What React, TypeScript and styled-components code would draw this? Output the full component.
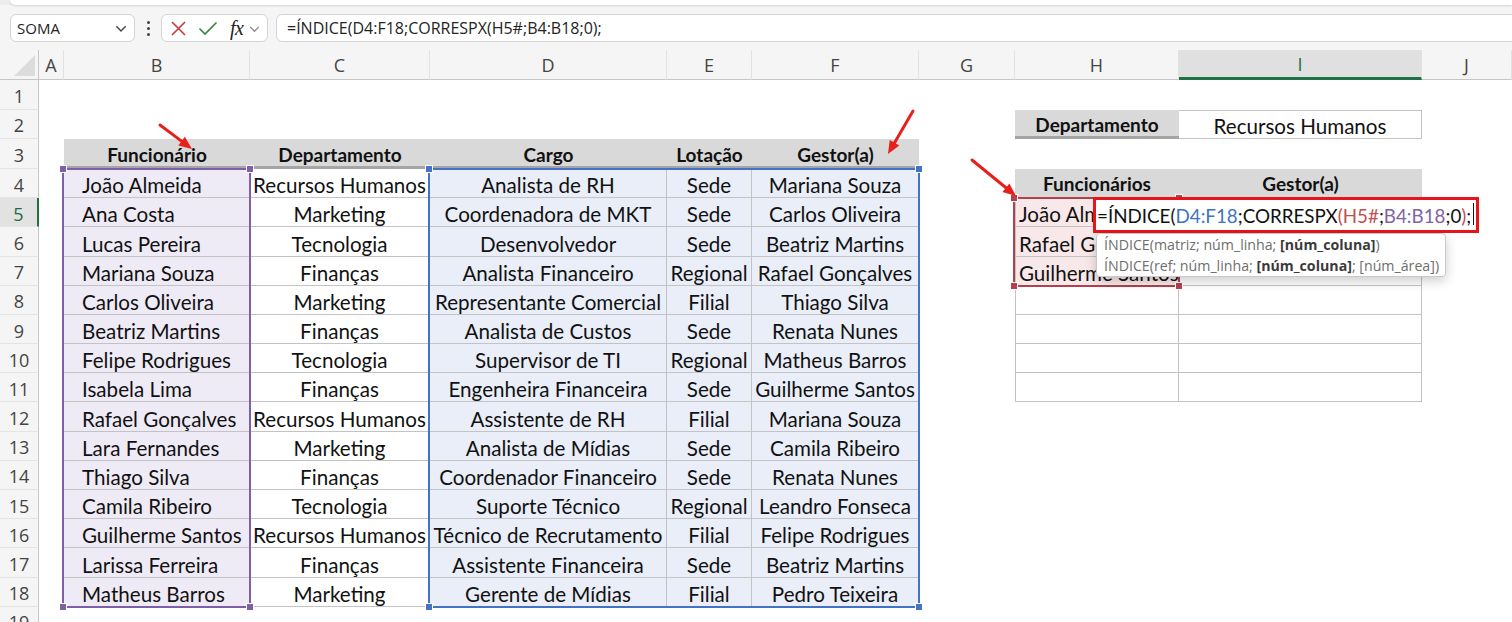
import React from "react";
import styled, { createGlobalStyle, css } from "styled-components";

const CELL_FONT = `Lato, "Open Sans", sans-serif`;
const UI_FONT = `"Open Sans", "Noto Sans", sans-serif`;

const GlobalStyle = createGlobalStyle`
  html, body { margin: 0; padding: 0; background: #fff; overflow: hidden; }
  body { font-family: ${UI_FONT}; }
`;

const COLS = ["A", "B", "C", "D", "E", "F", "G", "H", "I", "J"];

const employees = [
  ["João Almeida", "Recursos Humanos", "Analista de RH", "Sede", "Mariana Souza"],
  ["Ana Costa", "Marketing", "Coordenadora de MKT", "Sede", "Carlos Oliveira"],
  ["Lucas Pereira", "Tecnologia", "Desenvolvedor", "Sede", "Beatriz Martins"],
  ["Mariana Souza", "Finanças", "Analista Financeiro", "Regional", "Rafael Gonçalves"],
  ["Carlos Oliveira", "Marketing", "Representante Comercial", "Filial", "Thiago Silva"],
  ["Beatriz Martins", "Finanças", "Analista de Custos", "Sede", "Renata Nunes"],
  ["Felipe Rodrigues", "Tecnologia", "Supervisor de TI", "Regional", "Matheus Barros"],
  ["Isabela Lima", "Finanças", "Engenheira Financeira", "Sede", "Guilherme Santos"],
  ["Rafael Gonçalves", "Recursos Humanos", "Assistente de RH", "Filial", "Mariana Souza"],
  ["Lara Fernandes", "Marketing", "Analista de Mídias", "Sede", "Camila Ribeiro"],
  ["Thiago Silva", "Finanças", "Coordenador Financeiro", "Sede", "Renata Nunes"],
  ["Camila Ribeiro", "Tecnologia", "Suporte Técnico", "Regional", "Leandro Fonseca"],
  ["Guilherme Santos", "Recursos Humanos", "Técnico de Recrutamento", "Filial", "Felipe Rodrigues"],
  ["Larissa Ferreira", "Finanças", "Assistente Financeira", "Sede", "Beatriz Martins"],
  ["Matheus Barros", "Marketing", "Gerente de Mídias", "Filial", "Pedro Teixeira"],
];

const spill = ["João Almeida", "Rafael Gonçalves", "Guilherme Santos"];

// ---------- top chrome ----------
const Page = styled.div`
  width: 1512px;
  height: 622px;
  display: flex;
  flex-direction: column;
  background: #f5f5f5;
  overflow: hidden;
`;

const RibbonEdge = styled.div`
  flex-shrink: 0;
  height: 5px;
  padding-left: 10px;
  display: flex;
  background: #ececec;
`;

const RibbonCard = styled.div`
  flex: 1;
  background: #fff;
  border-radius: 0 0 0 8px;
  box-shadow: 0 1px 2px rgba(0, 0, 0, 0.15);
`;

const FormulaBar = styled.div`
  flex-shrink: 0;
  height: 45px;
  box-sizing: border-box;
  padding: 9px 0 8px 10px;
  display: flex;
  align-items: stretch;
`;

const Box = styled.div`
  box-sizing: border-box;
  background: #fff;
  border: 1px solid #d4d4d4;
  border-radius: 6px;
  display: flex;
  align-items: center;
  font-size: 15px;
  color: #242424;
`;

const NameBox = styled(Box)`
  width: 125px;
  padding: 0 6px 0 6px;
  justify-content: space-between;
`;

const Kebab = styled.div`
  width: 26px;
  display: flex;
  flex-direction: column;
  align-items: center;
  justify-content: center;
  gap: 3px;

  span {
    width: 3px;
    height: 3px;
    border-radius: 50%;
    background: #444;
  }
`;

const ActionBox = styled(Box)`
  width: 107px;
  padding: 0 4px 0 8px;
  gap: 11px;
`;

const Fx = styled.span`
  font-family: "Liberation Serif", serif;
  font-style: italic;
  font-size: 20px;
  color: #222;
  margin-left: 1px;
  margin-right: -6px;
  letter-spacing: -0.5px;
`;

const FormulaInput = styled(Box)`
  flex: 1;
  margin-left: 8px;
  margin-right: -12px;
  padding-left: 10px;
  font-size: 16px;
`;

const Chevron = ({ size = 12, color = "#444" }: { size?: number; color?: string }) => (
  <svg width={size} height={size} viewBox="0 0 12 12">
    <path d="M2 4.5 L6 8.5 L10 4.5" fill="none" stroke={color} strokeWidth="1.2" />
  </svg>
);

// ---------- sheet ----------
const Sheet = styled.div`
  position: relative;
  flex: 1;
  min-height: 0;
  display: grid;
  grid-template-columns: 39px 25px 186px 180px 237px 85px 167px 96px 164px 243px 90px;
  grid-template-rows: 30px repeat(3, 29.67px) repeat(16, 29.2px);
  background: #fff;
`;

const Corner = styled.div`
  grid-column: 1;
  grid-row: 1;
  background: #f5f5f5;
  border-bottom: 1px solid #c6c6c6;
  border-right: 1px solid #c6c6c6;
  box-sizing: border-box;
  position: relative;

  &::after {
    content: "";
    position: absolute;
    right: 3px;
    bottom: 3px;
    border-style: solid;
    border-width: 0 0 21px 21px;
    border-color: transparent transparent #dcdcdc transparent;
  }
`;

const ColHead = styled.div<{ $c: number; $active?: boolean }>`
  grid-column: ${(p) => p.$c};
  grid-row: 1;
  box-sizing: border-box;
  display: flex;
  align-items: center;
  justify-content: center;
  font-size: 18px;
  color: ${(p) => (p.$active ? "#1d6b40" : "#444")};
  background: ${(p) => (p.$active ? "#e0e0e0" : "#f5f5f5")};
  border-right: 1px solid #e2e2e2;
  border-bottom: ${(p) => (p.$active ? "3px solid #1f7244" : "1px solid #c6c6c6")};
`;

const RowHead = styled.div<{ $r: number; $active?: boolean }>`
  grid-column: 1;
  grid-row: ${(p) => p.$r + 1};
  box-sizing: border-box;
  display: flex;
  align-items: center;
  justify-content: center;
  padding-top: 3px;
  font-size: 18px;
  color: ${(p) => (p.$active ? "#1d6b40" : "#444")};
  background: ${(p) => (p.$active ? "#e2e2e2" : "#f5f5f5")};
  border-bottom: 1px solid #e4e4e4;
  border-right: ${(p) => (p.$active ? "2px solid #1f7244" : "1px solid #c6c6c6")};
`;

type Tone = "none" | "head" | "purple" | "blue" | "pink" | "white";

const toneBg: Record<Tone, string> = {
  none: "transparent",
  head: "#d9d9d9",
  purple: "#efebf6",
  blue: "#e9eef8",
  pink: "#f8e8ea",
  white: "#fff",
};

const Cell = styled.div<{
  $c: number;
  $r: number;
  $tone?: Tone;
  $left?: boolean;
  $indent?: number;
  $bold?: boolean;
  $grid?: boolean;
  $lead?: boolean;
  $top?: boolean;
  $rule?: boolean;
}>`
  grid-column: ${(p) => p.$c + 1};
  grid-row: ${(p) => p.$r + 1};
  box-sizing: border-box;
  display: flex;
  align-items: flex-end;
  justify-content: ${(p) => (p.$left ? "flex-start" : "center")};
  padding: 0 0 ${(p) => (p.$bold ? 3 : 0)}px ${(p) => p.$indent ?? 0}px;
  overflow: hidden;
  white-space: nowrap;
  font-family: ${CELL_FONT};
  font-size: ${(p) => (p.$bold ? 19 : 20.6)}px;
  font-weight: ${(p) => (p.$bold ? 700 : 400)};
  color: #111;
  background: ${(p) => toneBg[p.$tone ?? "none"]};
  ${(p) =>
    p.$grid &&
    css`
      border-right: 1px solid #c3c3c3;
      border-bottom: 1px solid #c3c3c3;
    `}
  ${(p) => p.$lead && css`border-left: 1px solid #c3c3c3;`}
  ${(p) => p.$top && css`border-top: 1px solid #c3c3c3;`}
  ${(p) => p.$rule && css`box-shadow: inset 0 -3px 0 #a5a5a5;`}
`;

const Outline = styled.div<{ $cols: string; $rows: string; $color: string }>`
  grid-column: ${(p) => p.$cols};
  grid-row: ${(p) => p.$rows};
  position: relative;
  z-index: 2;
  margin: -1px -1px -1px -2px;
  border: 2px solid ${(p) => p.$color};
  pointer-events: none;
`;

const Handle = styled.span<{ $color: string; $x: "left" | "right"; $y: "top" | "bottom" }>`
  position: absolute;
  ${(p) => p.$x}: -5px;
  ${(p) => p.$y}: -5px;
  width: 6px;
  height: 6px;
  background: ${(p) => p.$color};
  border: 1px solid #fff;
`;

const RangeBox = ({ cols, rows, color }: { cols: string; rows: string; color: string }) => (
  <Outline $cols={cols} $rows={rows} $color={color}>
    <Handle $color={color} $x="left" $y="top" />
    <Handle $color={color} $x="right" $y="top" />
    <Handle $color={color} $x="left" $y="bottom" />
    <Handle $color={color} $x="right" $y="bottom" />
  </Outline>
);

const EditBox = styled.div`
  position: absolute;
  left: 1093px;
  top: 147px;
  width: 386px;
  height: 36px;
  box-sizing: border-box;
  border: 3px solid #e8141b;
  background: #fff;
  z-index: 5;
  display: flex;
  align-items: flex-end;
  padding: 0 0 3px 1px;
  font-family: ${CELL_FONT};
  font-size: 18.8px;
  color: #111;
  white-space: nowrap;
`;

const Ref = styled.span<{ $color: string }>`
  color: ${(p) => p.$color};
`;

const Caret = styled.span`
  display: inline-block;
  width: 1px;
  height: 22px;
  background: #111;
  margin-left: 2px;
  align-self: center;
`;

const Tooltip = styled.div`
  position: absolute;
  left: 1096px;
  top: 183px;
  width: 350px;
  height: 44px;
  box-sizing: border-box;
  padding: 0 7px;
  background: #fff;
  border: 1px solid #c9c9c9;
  border-radius: 4px;
  box-shadow: 0 4px 12px rgba(0, 0, 0, 0.2);
  z-index: 6;
  font-size: 14.2px;
  line-height: 21px;
  color: #6e6e6e;
  white-space: nowrap;

  b {
    color: #3a3a3a;
  }
`;

const Annotations = styled.svg`
  position: absolute;
  left: 0;
  top: 0;
  width: 1512px;
  height: 572px;
  z-index: 7;
  pointer-events: none;
`;

const Arrow = ({ x1, y1, x2, y2 }: { x1: number; y1: number; x2: number; y2: number }) => {
  const dx = x2 - x1;
  const dy = y2 - y1;
  const len = Math.hypot(dx, dy);
  const ux = dx / len;
  const uy = dy / len;
  const head = 13;
  const half = 5.5;
  const bx = x2 - ux * head;
  const by = y2 - uy * head;
  const pts = `${x2},${y2} ${bx - uy * half},${by + ux * half} ${bx + uy * half},${by - ux * half}`;
  return (
    <g>
      <line x1={x1} y1={y1} x2={bx + ux * 2} y2={by + uy * 2} stroke="#e8201c" strokeWidth="3" strokeLinecap="round" />
      <polygon points={pts} fill="#e8201c" />
    </g>
  );
};

export default function App() {
  const rowsShown = Array.from({ length: 19 }, (_, i) => i + 1);

  return (
    <Page>
      <GlobalStyle />
      <RibbonEdge>
        <RibbonCard />
      </RibbonEdge>

      <FormulaBar>
        <NameBox>
          <span>SOMA</span>
          <Chevron size={14} />
        </NameBox>
        <Kebab>
          <span />
          <span />
          <span />
        </Kebab>
        <ActionBox>
          <svg width="17" height="17" viewBox="0 0 17 17">
            <path d="M2 2 L15 15 M15 2 L2 15" stroke="#d13438" strokeWidth="1.6" fill="none" />
          </svg>
          <svg width="20" height="17" viewBox="0 0 20 17">
            <path d="M1.5 8.5 L7 14 L18.5 2.5" stroke="#2c8a3c" strokeWidth="1.6" fill="none" />
          </svg>
          <Fx>fx</Fx>
          <Chevron size={13} color="#8a8a8a" />
        </ActionBox>
        <FormulaInput>=ÍNDICE(D4:F18;CORRESPX(H5#;B4:B18;0);</FormulaInput>
      </FormulaBar>

      <Sheet>
        <Corner />
        {COLS.map((c, i) => (
          <ColHead key={c} $c={i + 2} $active={c === "I"}>
            {c}
          </ColHead>
        ))}
        {rowsShown.map((r) => (
          <RowHead key={r} $r={r} $active={r === 5}>
            {r}
          </RowHead>
        ))}

        {/* main table header (row 3) */}
        {["Funcionário", "Departamento", "Cargo", "Lotação", "Gestor(a)"].map((h, i) => (
          <Cell key={h} $c={i + 2} $r={3} $tone="head" $bold $rule>
            {h}
          </Cell>
        ))}

        {/* main table body */}
        {employees.map((row, i) =>
          row.map((v, j) => (
            <Cell
              key={`${i}-${j}`}
              $c={j + 2}
              $r={i + 4}
              $tone={j === 0 ? "purple" : j === 1 ? "white" : "blue"}
              $left={j === 0}
              $indent={j === 0 ? 18 : 0}
              $grid
            >
              {v}
            </Cell>
          ))
        )}

        {/* lookup block */}
        <Cell $c={8} $r={2} $tone="head" $bold $rule>
          Departamento
        </Cell>
        <Cell $c={9} $r={2} $tone="white" $grid $top>
          Recursos Humanos
        </Cell>
        <Cell $c={8} $r={4} $tone="head" $bold>
          Funcionários
        </Cell>
        <Cell $c={9} $r={4} $tone="head" $bold>
          Gestor(a)
        </Cell>
        {Array.from({ length: 7 }, (_, i) => (
          <React.Fragment key={i}>
            <Cell $c={8} $r={i + 5} $tone={i < 3 ? "pink" : "white"} $left $indent={3} $grid $lead>
              {spill[i] ?? ""}
            </Cell>
            <Cell $c={9} $r={i + 5} $tone="white" $grid />
          </React.Fragment>
        ))}

        <RangeBox cols="3 / 4" rows="5 / 20" color="#7f5fa9" />
        <RangeBox cols="5 / 8" rows="5 / 20" color="#4472c4" />
        <RangeBox cols="9 / 10" rows="6 / 9" color="#b3404c" />

        <EditBox>
          =ÍNDICE(<Ref $color="#3f73c2">D4:F18</Ref>;CORRESPX<Ref $color="#c0504d">(H5#</Ref>;
          <Ref $color="#8064a2">B4:B18</Ref>;0<Ref $color="#c0504d">)</Ref>;
          <Caret />
        </EditBox>

        <Tooltip>
          <div>
            ÍNDICE(matriz; núm_linha; <b>[núm_coluna]</b>)
          </div>
          <div>
            ÍNDICE(ref; núm_linha; <b>[núm_coluna]</b>; [núm_área])
          </div>
        </Tooltip>

        <Annotations viewBox="0 0 1512 572">
          <Arrow x1={160} y1={75} x2={192} y2={99} />
          <Arrow x1={913} y1={61} x2={888} y2={104} />
          <Arrow x1={972} y1={110} x2={1016} y2={146} />
        </Annotations>
      </Sheet>
    </Page>
  );
}
